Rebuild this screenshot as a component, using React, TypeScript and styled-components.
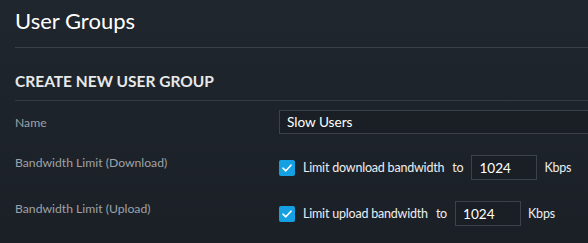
import React, {FC} from 'react';
import styled, {createGlobalStyle} from 'styled-components';

const GlobalStyle = createGlobalStyle`
  html, body {
    margin: 0;
    padding: 0;
    background: #1e242b;
  }
  body {
    font-family: Lato, "Open Sans", sans-serif;
  }
`;

const Page = styled.div`
  width: 588px;
  height: 243px;
  overflow: hidden;
  padding-left: 15px;
  box-sizing: border-box;
  background: linear-gradient(#20262d, #1b2027);
`;

const Header = styled.div`
  padding: 8px 0 13px;
  border-bottom: 1px solid #3b4048;
`;

const Title = styled.h1`
  margin: 0;
  font-size: 22px;
  line-height: 26px;
  font-weight: 400;
  color: #ffffff;
`;

const SectionHeading = styled.h2`
  margin: 24px 0 0;
  padding-bottom: 10px;
  font-size: 15.5px;
  line-height: 18px;
  font-weight: 700;
  color: #e8e9ea;
  text-transform: uppercase;
  border-bottom: 1px solid #343a42;
`;

const Form = styled.div`
  display: flex;
  flex-direction: column;
  gap: 21px;
  padding-top: 9px;
`;

const Row = styled.div`
  display: grid;
  grid-template-columns: 264px 1fr;
  align-items: start;
`;

const Label = styled.div<{ $offset: number }>`
  padding-top: ${p => p.$offset}px;
  font-size: 12.2px;
  line-height: 15px;
  color: #9da2a8;
`;

const Controls = styled.div`
  display: flex;
  align-items: center;
  height: 25px;
  font-size: 12.5px;
  letter-spacing: -0.2px;
  color: #eceef0;
`;

const TextInput = styled.div<{ $width?: number }>`
  box-sizing: border-box;
  width: ${p => (p.$width ? `${p.$width}px` : '400px')};
  flex-shrink: 0;
  height: ${p => (p.$width ? '25px' : '24px')};
  padding-left: 7px;
  display: flex;
  align-items: center;
  border: 1px solid #3c424a;
  background: #1a1f25;
  font-size: 13.6px;
  letter-spacing: 0;
  color: #ffffff;
`;

const Check = styled.span`
  width: 16px;
  height: 16px;
  border-radius: 2px;
  background: #14a0e2;
  display: inline-flex;
  align-items: center;
  justify-content: center;
  margin-right: 8px;
  flex-shrink: 0;
`;

const Word = styled.span<{ $gap: number }>`
  margin-right: ${p => p.$gap}px;
  white-space: nowrap;
`;

const Unit = styled.span`
  margin-left: 7px;
  white-space: nowrap;
`;

const CheckMark: FC = () => (
    <svg width="10" height="8" viewBox="0 0 10 8">
        <path d="M1 4.2 L3.8 6.8 L9 1.2" fill="none" stroke="#fff" strokeWidth="1.6"
              strokeLinecap="round" strokeLinejoin="round"/>
    </svg>
);

interface LimitProps {
    text: string;
    value: string;
}

const LimitControl: FC<LimitProps> = ({text, value}) => (
    <Controls>
        <Check><CheckMark/></Check>
        <Word $gap={8}>{text}</Word>
        <Word $gap={8}>to</Word>
        <TextInput $width={66}>{value}</TextInput>
        <Unit>Kbps</Unit>
    </Controls>
);

const App: FC = () => {
    return (
        <Page>
            <GlobalStyle/>
            <Header>
                <Title>User Groups</Title>
            </Header>
            <SectionHeading>Create New User Group</SectionHeading>
            <Form>
                <Row>
                    <Label $offset={5}>Name</Label>
                    <TextInput>Slow Users</TextInput>
                </Row>
                <Row>
                    <Label $offset={0}>Bandwidth Limit (Download)</Label>
                    <LimitControl text="Limit download bandwidth" value="1024"/>
                </Row>
                <Row>
                    <Label $offset={0}>Bandwidth Limit (Upload)</Label>
                    <LimitControl text="Limit upload bandwidth" value="1024"/>
                </Row>
            </Form>
        </Page>
    );
};

export default App;
